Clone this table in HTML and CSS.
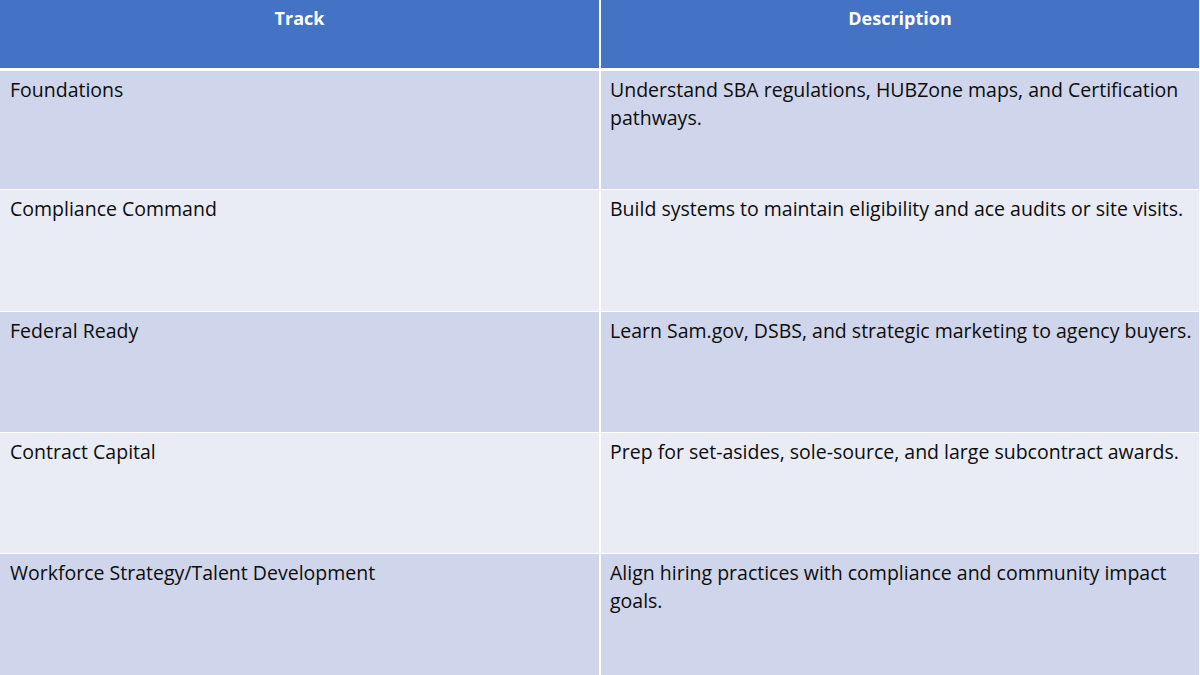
FILE: index.html
```html
<!DOCTYPE html>
<html>
<head>
<meta charset="utf-8">
<link rel="stylesheet" href="styles.css">
</head>
<body>
<div class="table">
  <div class="cell head">Track</div>
  <div class="cell head">Description</div>

  <div class="cell odd">Foundations</div>
  <div class="cell odd desc">Understand SBA regulations, HUBZone maps, and Certification pathways.</div>

  <div class="cell even">Compliance Command</div>
  <div class="cell even desc">Build systems to maintain eligibility and ace audits or site visits.</div>

  <div class="cell odd">Federal Ready</div>
  <div class="cell odd desc">Learn Sam.gov, DSBS, and strategic marketing to agency buyers.</div>

  <div class="cell even">Contract Capital</div>
  <div class="cell even desc">Prep for set-asides, sole-source, and large subcontract awards.</div>

  <div class="cell odd">Workforce Strategy/Talent Development</div>
  <div class="cell odd desc">Align hiring practices with compliance and community impact goals.</div>
</div>
</body>
</html>
```
FILE: styles.css
```css
html, body {
  margin: 0;
  padding: 0;
  background: #ffffff;
  width: 1200px;
  height: 675px;
  overflow: hidden;
}
.table {
  display: grid;
  grid-template-columns: 599px 598px;
  grid-template-rows: 70px 118px 121px 120px 120px 121px;
  column-gap: 2px;
  row-gap: 1px;
  font-family: "Open Sans", "Liberation Sans", sans-serif;
  font-size: 19.5px;
  line-height: 28px;
  color: #0d0d0d;
}
.cell {
  padding: 5px 4px 0 10px;
}
.desc {
  padding-left: 9px;
  padding-right: 0;
}
.head {
  background: #4472c4;
  color: #ffffff;
  font-weight: bold;
  font-size: 18px;
  text-align: center;
  padding: 4px 0 0 0;
  margin-bottom: 2px;
}
.odd {
  background: #cfd5ea;
}
.even {
  background: #e9ebf5;
}
```
